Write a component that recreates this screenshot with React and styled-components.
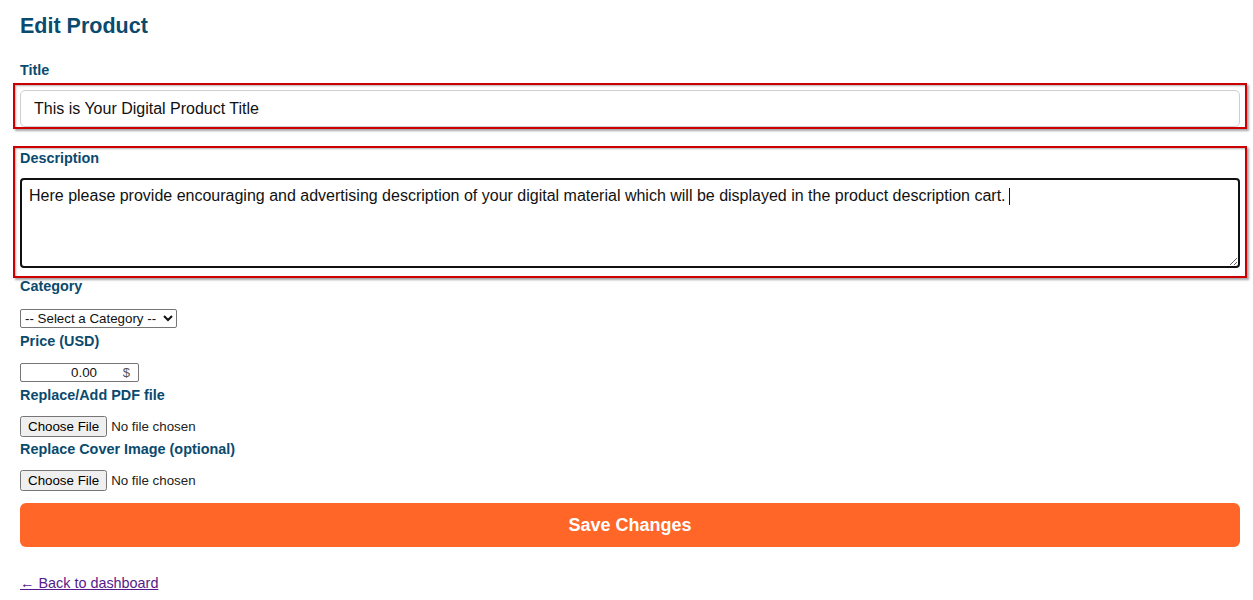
import React, { useEffect, useRef, useState } from 'react';
import styled, { createGlobalStyle } from 'styled-components';

const GlobalStyle = createGlobalStyle`
  html, body {
    margin: 0;
    padding: 0;
    background: #ffffff;
  }
  body {
    font-family: "Liberation Sans", Arial, sans-serif;
  }
`;

const Page = styled.div`
  width: 1220px;
  padding: 14px 0 0 20px;
  font-family: "Liberation Sans", Arial, sans-serif;
`;

const Heading = styled.h2`
  margin: 0 0 23px;
  font-size: 21.5px;
  line-height: 25px;
  font-weight: 700;
  color: #0a4a6e;
`;

const Label = styled.label`
  display: block;
  font-size: 14.4px;
  line-height: 16px;
  font-weight: 700;
  color: #0a4a6e;
  margin-bottom: ${({ $gap }) => ($gap != null ? $gap : 14)}px;
`;

const Field = styled.div`
  margin-bottom: ${({ $after }) => ($after != null ? $after : 5)}px;
`;

// red annotation frame around the highlighted fields
const Highlight = styled.div`
  margin: ${({ $top }) => $top || 0}px -7px 0;
  padding: ${({ $pad }) => $pad};
  border: 2px solid #cc0000;
  box-shadow: 2px 2px 2px rgba(0, 0, 0, 0.35), inset 1px 1px 2px rgba(0, 0, 0, 0.3);
`;

const TitleInput = styled.input`
  display: block;
  box-sizing: border-box;
  width: 100%;
  height: 37px;
  padding: 0 13px;
  border: 1px solid #cfcfcf;
  border-radius: 5px;
  font-family: "Liberation Sans", Arial, sans-serif;
  font-size: 16px;
  color: #111;
  outline: none;
`;

const AreaWrap = styled.div`
  position: relative;
`;

const DescriptionArea = styled.textarea`
  display: block;
  box-sizing: border-box;
  width: 100%;
  height: 90px;
  padding: 7px 7px 5px;
  border: 2px solid #101010;
  border-radius: 4px;
  font-family: "Liberation Sans", Arial, sans-serif;
  font-size: 16px;
  line-height: 18px;
  color: #111;
  outline: none;
  resize: vertical;
  caret-color: transparent;
`;

// text caret drawn over the focused textarea
const Caret = styled.span`
  position: absolute;
  left: 989px;
  top: 10px;
  width: 1px;
  height: 17px;
  background: #111;
  pointer-events: none;
`;

const Select = styled.select`
  display: block;
  width: 157px;
  height: 19px;
  font-family: "Liberation Sans", Arial, sans-serif;
  font-size: 13.33px;
  color: #111;
  border: 1px solid #767676;
  border-radius: 2px;
  background: #fff;
`;

const PriceWrap = styled.div`
  position: relative;
  width: 119px;
`;

const PriceInput = styled.input`
  display: block;
  box-sizing: border-box;
  width: 119px;
  height: 19px;
  padding: 0 41px 0 4px;
  border: 1px solid #767676;
  border-radius: 2px;
  text-align: right;
  font-family: "Liberation Sans", Arial, sans-serif;
  font-size: 13.33px;
  color: #111;
  outline: none;
`;

const Currency = styled.span`
  position: absolute;
  right: 9px;
  top: 2px;
  font-size: 13px;
  line-height: 15px;
  color: #555;
  pointer-events: none;
`;

const FileInput = styled.input`
  display: block;
  font-family: "Liberation Sans", Arial, sans-serif;
  font-size: 13.33px;
  color: #222;
`;

const SaveButton = styled.button`
  display: block;
  width: 100%;
  height: 44px;
  margin-top: 12px;
  border: none;
  border-radius: 6px;
  background: #ff6628;
  color: #ffffff;
  font-family: "Liberation Sans", Arial, sans-serif;
  font-size: 18px;
  font-weight: 700;
  cursor: pointer;
`;

const BackLink = styled.a`
  display: inline-block;
  margin-top: 28px;
  font-size: 14.4px;
  line-height: 16px;
  color: #551a8b;
  text-decoration: underline;
`;

const descriptionText =
  'Here please provide encouraging and advertising description of your digital material which will be displayed in the product description cart. ';

const App = () => {
  const [title, setTitle] = useState('This is Your Digital Product Title');
  const [description, setDescription] = useState(descriptionText);
  const [price, setPrice] = useState('0.00');
  const areaRef = useRef(null);

  useEffect(() => {
    const el = areaRef.current;
    if (el) {
      el.focus();
      el.setSelectionRange(el.value.length, el.value.length);
    }
  }, []);

  return (
    <Page>
      <GlobalStyle />
      <Heading>Edit Product</Heading>
      <form onSubmit={(e) => e.preventDefault()}>
        <Label $gap={5}>Title</Label>
        <Highlight $pad="5px 5px 0">
          <TitleInput value={title} onChange={(e) => setTitle(e.target.value)} />
        </Highlight>

        <Highlight $top={17} $pad="2px 5px 8px">
          <Label $gap={12}>Description</Label>
          <AreaWrap>
            <DescriptionArea
              ref={areaRef}
              value={description}
              onChange={(e) => setDescription(e.target.value)}
            />
            <Caret />
          </AreaWrap>
        </Highlight>

        <Field>
          <Label $gap={15}>Category</Label>
          <Select defaultValue="">
            <option value="">-- Select a Category --</option>
            <option value="ebooks">E-books</option>
            <option value="templates">Templates</option>
            <option value="courses">Courses</option>
          </Select>
        </Field>

        <Field>
          <Label>Price (USD)</Label>
          <PriceWrap>
            <PriceInput value={price} onChange={(e) => setPrice(e.target.value)} />
            <Currency>$</Currency>
          </PriceWrap>
        </Field>

        <Field $after={4}>
          <Label $gap={13}>Replace/Add PDF file</Label>
          <FileInput type="file" accept="application/pdf" />
        </Field>

        <Field $after={0}>
          <Label $gap={13}>Replace Cover Image (optional)</Label>
          <FileInput type="file" accept="image/*" />
        </Field>

        <SaveButton type="submit">Save Changes</SaveButton>
      </form>
      <BackLink href="#dashboard">← Back to dashboard</BackLink>
    </Page>
  );
};

export default App;
